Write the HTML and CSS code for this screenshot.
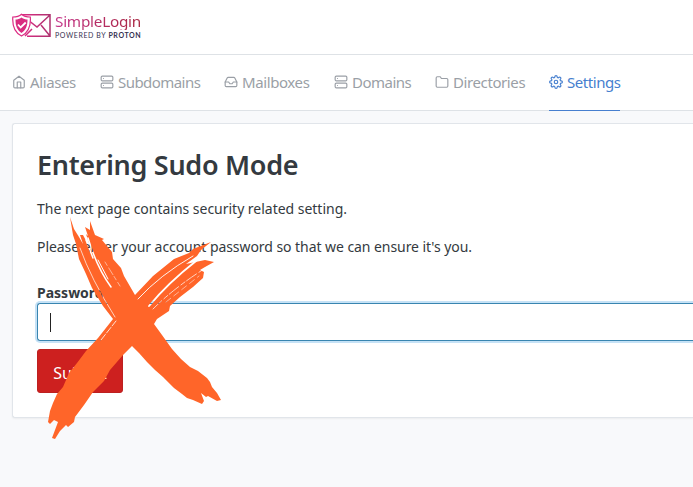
FILE: index.html
```html
<!DOCTYPE html>
<html lang="en">
<head>
<meta charset="utf-8">
<title>SimpleLogin</title>
<link rel="stylesheet" href="styles.css">
</head>
<body>
<header class="header">
  <svg class="logo-mark" width="40" height="26" viewBox="0 0 40 26" fill="none">
    <defs><linearGradient id="brand" x2="1"><stop stop-color="#dc2b83"/><stop offset="1" stop-color="#ae326f"/></linearGradient></defs>
    <path d="M10 1.8H38V23.2H15M11 3l14 11L38 2M20 16l-7 7M29 12l9 11" stroke="url(#brand)" stroke-width="1.5"/>
    <path d="M9.500 1.200C7 3.500 4 4 .8 4c-.6 9 1.500 15.500 8.700 19C16.700 19.500 19 13 18.300 4 15 4 12 3.500 9.500 1.200Z" fill="#fff" stroke="#dc2b83" stroke-width="1.2"/>
    <path d="M9.500 4.500C7.500 6 5.500 6.500 3.500 6.500c0 6.500 1.500 10.500 6 13.500 4.500-3 6-7 6-13.500-2 0-4-.5-6-2Z" fill="#d92c80"/>
    <path d="m6 11.500 2.700 3 5-5" stroke="#fff" stroke-width="1.800"/>
  </svg>
  <div class="logo-text">
    <div class="logo-name">SimpleLogin</div>
    <div class="logo-sub">POWERED BY <b>PROTON</b></div>
  </div>
</header>
<nav class="nav">
  <a class="tab aliases"><svg class="icon" viewBox="0 0 24 24"><path d="m3 9 9-7 9 7v11a2 2 0 0 1-2 2H5a2 2 0 0 1-2-2Z"/><path d="M9 22V12h6v10"/></svg><span>Aliases</span></a>
  <a class="tab subdomains"><svg class="icon" viewBox="0 0 24 24"><rect x="2" y="2" width="20" height="8" rx="2"/><rect x="2" y="14" width="20" height="8" rx="2"/><path d="M6 6h.01M6 18h.01"/></svg><span>Subdomains</span></a>
  <a class="tab mailboxes"><svg class="icon" viewBox="0 0 24 24"><path d="M22 12h-6l-2 3h-4l-2-3H2"/><path d="M5.450 5.110 2 12v6a2 2 0 0 0 2 2h16a2 2 0 0 0 2-2v-6l-3.450-6.890A2 2 0 0 0 16.760 4H7.240a2 2 0 0 0-1.790 1.110Z"/></svg><span>Mailboxes</span></a>
  <a class="tab domains"><svg class="icon" viewBox="0 0 24 24"><rect x="2" y="2" width="20" height="8" rx="2"/><rect x="2" y="14" width="20" height="8" rx="2"/><path d="M6 6h.01M6 18h.01"/></svg><span>Domains</span></a>
  <a class="tab directories"><svg class="icon" viewBox="0 0 24 24"><path d="M22 19a2 2 0 0 1-2 2H4a2 2 0 0 1-2-2V5a2 2 0 0 1 2-2h5l2 3h9a2 2 0 0 1 2 2Z"/></svg><span>Directories</span></a>
  <a class="tab settings active"><svg class="icon" viewBox="0 0 24 24"><circle cx="12" cy="12" r="3"/><path d="M19.400 15a1.650 1.650 0 0 0 .33 1.820l.06.06a2 2 0 1 1-2.830 2.830l-.06-.06a1.650 1.650 0 0 0-2.800 1.170V21a2 2 0 0 1-4 0v-.09a1.650 1.650 0 0 0-2.900-1.260l-.06.06a2 2 0 1 1-2.830-2.830l.06-.06A1.650 1.650 0 0 0 3.090 14H3a2 2 0 0 1 0-4h.09a1.650 1.650 0 0 0 1.260-2.900l-.06-.06a2 2 0 1 1 2.830-2.830l.06.06A1.650 1.650 0 0 0 10 3.090V3a2 2 0 0 1 4 0v.09a1.650 1.650 0 0 0 2.820 1.180l.06-.06a2 2 0 1 1 2.830 2.830l-.06.06A1.650 1.650 0 0 0 20.910 10H21a2 2 0 0 1 0 4h-.09a1.650 1.650 0 0 0-1.510 1Z"/></svg><span>Settings</span></a>
</nav>
<main class="card">
  <h1>Entering Sudo Mode</h1>
  <p class="first">The next page contains security related setting.</p>
  <p class="second">Please enter your account password so that we can ensure it's you.</p>
  <label class="label">Password</label>
  <div class="field"><span class="caret"></span></div>
  <button class="submit">Submit</button>
</main>
<svg class="cross" width="180" height="230" viewBox="45 213 180 230">
  <defs>
    <mask id="bristles" maskUnits="userSpaceOnUse" x="45" y="213" width="180" height="230">
      <rect x="45" y="213" width="180" height="230" fill="#fff"/>
      <g fill="none" stroke="#000" stroke-linecap="round">
        <path d="M80 248Q91 279 115 317" stroke-width=".7"/>
        <path d="M88 238Q97 268 111 287" stroke-width="1.500"/>
        <path d="M86 240L93 258" stroke-width="1.500"/>
        <path d="M98 260L108 279" stroke-width="1"/>
        <path d="M105 262L120 286" stroke-width=".5" stroke-dasharray="4 3 8 2"/>
        <path d="M138 299Q160 275 193 256" stroke-width=".9"/>
        <path d="M149 306Q168 283 196 261" stroke-width="1.800"/>
        <path d="M153 309Q174 288 204 269" stroke-width=".7" stroke-dasharray="12 3 5 2"/>
        <path d="M166 302L199 276" stroke-width=".5" stroke-dasharray="6 4"/>
        <path d="M101 340L116 321" stroke-width=".8" stroke-dasharray="7 2"/>
      </g>
    </mask>
  </defs>
  <path mask="url(#bristles)" fill="#ff6529" d="M70 217 74 229 79 237 83 244 80 235 83 235 92 252 86 234 88 236 85 227 90 230 90 221 95 235 104 239 102 240 112 252 113 259 121 268 124 276 135 295 153 276 174 259 189 253 193 249 211 242 201 250 197 256 186 264 205 260 214 262 205 267 200 270 204 272 203 278 193 287 180 297 170 306 169 311 157 319 154 324 162 335 172 349 181 359 190 367 198 371 207 378 210 382 212 387 217 393 221 400 217 401 208 396 206 397 201 393 204 401 202 404 193 400 187 398 182 394 174 388 163 377 155 370 147 362 139 353 132 346 123 355 110 370 104 381 93 392 84 405 75 417 74 422 68 427 66 425 60 431 55 439 52 438 55 430 58 422 54 420 50 424 48 422 50 411 53 403 57 394 63 387 69 373 77 363 86 351 98 338 113 319 103 306 92 288 86 274 79 259 76 244 73 235Z"/>
</svg>
</body>
</html>
```
FILE: styles.css
```css
* { box-sizing: border-box; }
body {
  margin: 0;
  height: 487px;
  overflow: hidden;
  background: #f8f9fb;
  color: #343a40;
  font-family: "Noto Sans", sans-serif;
  font-size: 14px;
}
.header {
  height: 55px;
  padding: 13px 12px 0;
  display: flex;
  gap: 3px;
  background: #fff;
  border-bottom: 1px solid #dee2e6;
}
.logo-name {
  width: max-content;
  height: 17px;
  line-height: 17px;
  font-size: 15.300px;
  letter-spacing: -0.250px;
  background: linear-gradient(90deg, #c5368b, #a82640);
  background-clip: text;
  color: transparent;
}
.logo-sub {
  font-family: Lato, sans-serif;
  font-size: 7px;
  line-height: 10px;
  letter-spacing: 0.600px;
  color: #34304f;
  white-space: nowrap;
}
.nav {
  height: 56px;
  padding-left: 12px;
  display: flex;
  background: #fff;
  border-bottom: 1px solid #dee2e6;
}
.tab {
  height: 56px;
  padding-bottom: 2px;
  display: flex;
  align-items: center;
  gap: 4px;
  color: #9a9fa6;
  font-size: 15px;
  white-space: nowrap;
  border-bottom: 1px solid transparent;
}
.tab.active { color: #467fcf; border-color: #467fcf; }
.icon {
  width: 14px;
  height: 14px;
  flex: none;
  fill: none;
  stroke: currentColor;
  stroke-width: 2;
  stroke-linecap: round;
  stroke-linejoin: round;
}
.aliases { width: 64px; margin-right: 24px; letter-spacing: -0.400px; }
.subdomains { width: 100px; margin-right: 24px; letter-spacing: -0.550px; }
.mailboxes { width: 86px; margin-right: 24px; letter-spacing: -0.400px; }
.domains { width: 77px; margin-right: 24px; letter-spacing: -0.500px; }
.directories { width: 90px; margin-right: 24px; letter-spacing: -0.400px; }
.settings { width: 71px; letter-spacing: -0.450px; }
.card {
  height: 295px;
  margin: 12px 0 0 12px;
  padding: 23px 0 24px 24px;
  background: #fff;
  border: 1px solid #e1e5ea;
  border-right: 0;
  border-radius: 3px 0 0 3px;
  box-shadow: 0 1px 2px rgba(0, 0, 0, .05);
}
h1 {
  margin: 0 0 15px;
  font-size: 27px;
  line-height: 35px;
  font-weight: 600;
  letter-spacing: -0.300px;
}
p { margin: 0 0 14px; line-height: 24px; letter-spacing: -0.060px; }
.first { letter-spacing: -0.020px; }
.label { display: block; margin-top: 24px; line-height: 20px; font-weight: 700; }
.field {
  height: 38px;
  padding: 9px 12px;
  border: 1px solid #3985b0;
  border-right: 0;
  border-radius: 3px 0 0 3px;
  box-shadow: 0 0 0 2px #c6e2f6;
}
.caret { display: block; width: 1px; height: 19px; background: #222; }
.submit {
  display: block;
  width: 86px;
  height: 44px;
  margin-top: 8px;
  padding: 3px 0 0;
  border: 1px solid #bd2020;
  border-radius: 3px;
  background: #cd201f;
  color: #fff;
  font: 16px "Noto Sans", sans-serif;
}
.cross { position: absolute; left: 45px; top: 213px; }
```
